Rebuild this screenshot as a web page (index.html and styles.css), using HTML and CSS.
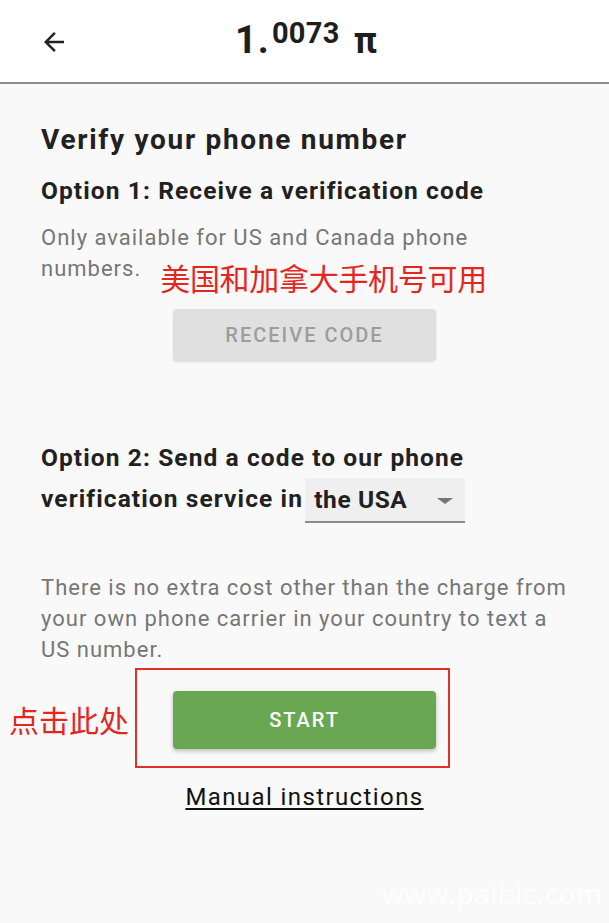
FILE: index.html
```
<!DOCTYPE html>
<html>
<head>
<meta charset="utf-8">
<link rel="stylesheet" href="styles.css">
</head>
<body>
<header class="topbar">
  <button class="back" aria-label="back">
    <svg width="30" height="30" viewBox="0 0 24 24"><path d="M20 11H7.83l5.59-5.59L12 4l-8 8 8 8 1.41-1.41L7.83 13H20v-2z" fill="#222"/></svg>
  </button>
  <div class="balance"><span class="int">1.</span><span class="dec">0073</span><span class="pi">π</span></div>
</header>
<main class="content">
  <h1 class="title">Verify your phone number</h1>
  <h2 class="opt">Option 1: Receive a verification code</h2>
  <p class="muted first">Only available for US and Canada phone numbers.<span class="note">美国和加拿大手机号可用</span></p>
  <div class="btnrow"><button class="btn disabled">RECEIVE CODE</button></div>
  <h2 class="opt opt2">Option 2: Send a code to our phone verification service in <span class="select">the USA<span class="caret"></span></span></h2>
  <p class="muted para">There is no extra cost other than the charge from your own phone carrier in your country to text a US number.</p>
  <div class="startrow">
    <span class="click">点击此处</span>
    <div class="redbox"><button class="btn start">START</button></div>
  </div>
  <div class="manual"><a href="#">Manual instructions</a></div>
</main>
<div class="wm">www.paibic.com</div>
</body>
</html>
```
FILE: styles.css
```
* { box-sizing: border-box; }
html, body { margin: 0; padding: 0; }
body {
  width: 609px; height: 923px; overflow: hidden;
  background: #f9f9f9;
  font-family: Roboto, "Noto Sans CJK SC", sans-serif;
  color: #212121;
  position: relative;
}
.topbar {
  height: 84px;
  background: #fff;
  border-bottom: 2px solid #8c8c8c;
  position: relative;
  display: flex; justify-content: center;
}
.back {
  position: absolute; left: 39px; top: 27px;
  background: none; border: 0; padding: 0; width: 30px; height: 30px;
}
.balance { font-weight: 700; color: #1e1e1e; display: flex; align-items: flex-start; margin-left: 3px; }
.int { font-size: 38px; line-height: 38px; margin-top: 21px; letter-spacing: 1px; }
.dec { font-size: 29px; line-height: 29px; margin-top: 19px; margin-left: 2px; letter-spacing: 0.3px; }
.pi { font-size: 36px; line-height: 36px; margin-top: 23px; margin-left: 14px; }
.content { padding: 0 36px 0 41px; }
.title { font-size: 28px; font-weight: 700; margin: 36px 0 0; line-height: 40px; letter-spacing: 1.7px; }
.opt { font-size: 24.5px; font-weight: 700; margin: 13px 0 0; line-height: 36px; letter-spacing: 1.1px; }
.muted { color: #767676; font-size: 22px; line-height: 31px; margin: 0; letter-spacing: 1px; }
.first { margin-top: 13px; }
.note { color: #e3261f; font-size: 30px; margin-left: 19px; font-family: "Noto Sans CJK SC", sans-serif; position: relative; top: 14px; letter-spacing: -0.3px; line-height: 0; }
.btnrow { display: flex; justify-content: center; margin-top: 25px; margin-left: 37px; width: 453px; }
.btn {
  width: 263px; height: 52px; border: 0; border-radius: 4px;
  font-family: Roboto, sans-serif; font-size: 20px; font-weight: 500; letter-spacing: 2px;
}
.disabled { background: #e0e0e0; color: #9d9d9d; box-shadow: 0 1px 2px rgba(0,0,0,0.12); }
.opt2 { margin-top: 76px; line-height: 41px; }
.select {
  display: inline-flex; align-items: center; justify-content: space-between;
  width: 160px; height: 45px; padding: 0 12px 0 9px; margin: -2px 0 -2px -5px;
  background: #efefef; border-bottom: 2px solid #8a8a8a; vertical-align: middle;
  letter-spacing: 0.6px;
}
.caret { width: 0; height: 0; border-left: 8px solid transparent; border-right: 8px solid transparent; border-top: 6px solid #757575; margin-top: 2px; }
.para { margin-top: 51px; }
.startrow { position: relative; margin-top: 3px; padding-left: 94px; }
.redbox { width: 315px; height: 100px; border: 2px solid #e0302a; padding: 21px 0 0 36px; }
.start { background: #69a752; color: #fff; height: 58px; box-shadow: 0 2px 4px rgba(0,0,0,0.25); display: block; }
.click { position: absolute; left: -32px; top: 34px; color: #e3261f; font-size: 30px; font-family: "Noto Sans CJK SC", sans-serif; line-height: 34px; }
.manual { text-align: center; margin-top: 13px; margin-left: -41px; margin-right: -36px; }
.manual a { color: #111; font-size: 24px; line-height: 32px; letter-spacing: 1.4px; text-decoration: underline; text-underline-offset: 3px; text-decoration-thickness: 2px; }
.wm { position: absolute; left: 382px; top: 874px; color: rgba(255,255,255,0.95); font-family: "Open Sans", sans-serif; font-size: 28px; letter-spacing: 0.5px; }
```
